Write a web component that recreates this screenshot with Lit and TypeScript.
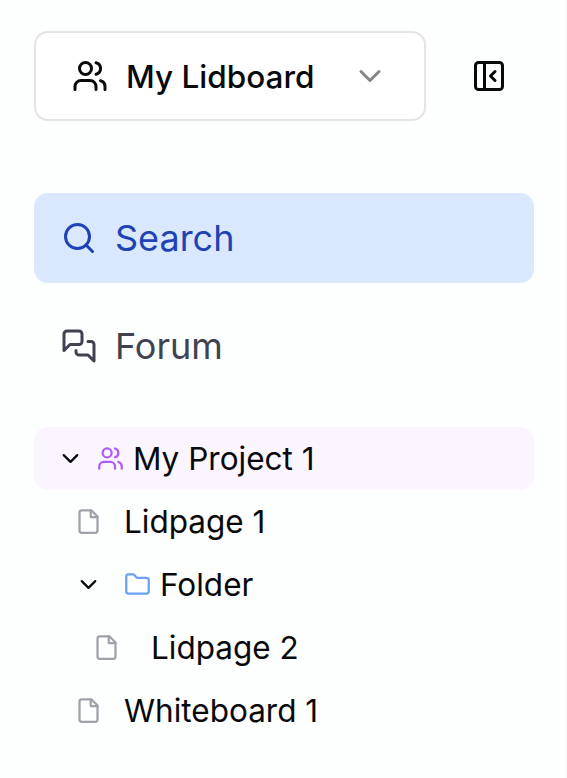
import { LitElement, html, css, svg } from "lit";
import { customElement, property } from "lit/decorators.js";

const glyphs = {
  users: svg`<path d="M16 21v-2a4 4 0 0 0-4-4H6a4 4 0 0 0-4 4v2"/><circle cx="9" cy="7" r="4"/><path d="M22 21v-2a4 4 0 0 0-3-3.87"/><path d="M16 3.13a4 4 0 0 1 0 7.75"/>`,
  chevron: svg`<path d="m6 9 6 6 6-6"/>`,
  panel: svg`<rect x="3" y="3" width="18" height="18" rx="2"/><path d="M9 3v18"/><path d="m16 15-3-3 3-3"/>`,
  search: svg`<circle cx="11" cy="11" r="8"/><path d="m21 21-4.3-4.3"/>`,
  forum: svg`<path d="M14 9a2 2 0 0 1-2 2H6l-4 4V4a2 2 0 0 1 2-2h8a2 2 0 0 1 2 2z"/><path d="M18 9h2a2 2 0 0 1 2 2v11l-4-4h-6a2 2 0 0 1-2-2v-1"/>`,
  file: svg`<path d="M14.5 2H6a2 2 0 0 0-2 2v16a2 2 0 0 0 2 2h12a2 2 0 0 0 2-2V7.5L14.5 2z"/><path d="M14 2v6h6"/>`,
  folder: svg`<path d="M20 20a2 2 0 0 0 2-2V8a2 2 0 0 0-2-2h-7.9a2 2 0 0 1-1.69-.9L9.6 3.9A2 2 0 0 0 7.93 3H4a2 2 0 0 0-2 2v13a2 2 0 0 0 2 2Z"/>`,
};

@customElement("ui-icon")
class UiIcon extends LitElement {
  @property() name: keyof typeof glyphs = "file";

  static styles = css`
    :host { display: block; flex: none; width: 36px; height: 36px; }
    svg {
      display: block; width: 100%; height: 100%;
      fill: none; stroke: currentColor; stroke-width: 2;
      stroke-linecap: round; stroke-linejoin: round;
    }
  `;

  render() {
    return html`<svg viewBox="0 0 24 24" aria-hidden="true">${glyphs[this.name]}</svg>`;
  }
}

@customElement("app-root")
class AppRoot extends LitElement {
  static styles = css`
    :host {
      display: block; box-sizing: border-box; height: 778px;
      padding: 31px 32px 0 34px;
      border-right: 1px solid #f4f4f5;
      background: #fdfefe; color: #09090b;
      font-family: Inter, "Liberation Sans", sans-serif;
      font-size: 31.5px; line-height: 45px;
      overflow: hidden;
    }
    .header { display: flex; align-items: center; height: 90px; }
    .picker {
      box-sizing: border-box; display: flex; align-items: center;
      width: 392px; height: 90px; padding: 0 36px;
      border: 2px solid #e4e4e7; border-radius: 14px;
      background: #fff; font-weight: 500;
    }
    .picker span { flex: 1; margin-left: 18px; white-space: nowrap; }
    .picker .arrow { color: #858589; }
    .collapse { margin-left: 45px; }
    .nav { display: flex; flex-direction: column; gap: 18px; margin-top: 72px; }
    .link {
      display: flex; align-items: center; gap: 18px;
      height: 90px; padding-left: 27px; border-radius: 14px;
      font-size: 36px; color: #3f4350;
    }
    .link.active { background: #dae8ff; color: #1f42b4; }
    .tree { margin-top: 36px; }
    .row { display: flex; align-items: center; height: 63px; border-radius: 14px; white-space: nowrap; }
    .row ui-icon { width: 27px; height: 27px; }
    .project { background: #faf5ff; padding-left: 23px; }
    .project .kind { margin: 0 9px 0 13px; color: #ad5cfa; }
    .level1 { padding-left: 41px; }
    .level2 { padding-left: 59px; }
    .doc { color: #a1a1aa; margin-right: 22px; }
    .level2 .doc { margin-right: 31px; }
    .folder .kind { margin: 0 9px 0 22px; color: #6ba1f5; }
  `;

  render() {
    return html`
      <div class="header">
        <div class="picker">
          <ui-icon name="users"></ui-icon>
          <span>My Lidboard</span>
          <ui-icon class="arrow" name="chevron"></ui-icon>
        </div>
        <ui-icon class="collapse" name="panel"></ui-icon>
      </div>
      <nav class="nav">
        <div class="link active"><ui-icon name="search"></ui-icon><span>Search</span></div>
        <div class="link"><ui-icon name="forum"></ui-icon><span>Forum</span></div>
      </nav>
      <div class="tree">
        <div class="row project">
          <ui-icon name="chevron"></ui-icon><ui-icon class="kind" name="users"></ui-icon><span>My Project 1</span>
        </div>
        <div class="row level1"><ui-icon class="doc" name="file"></ui-icon><span>Lidpage 1</span></div>
        <div class="row level1 folder">
          <ui-icon name="chevron"></ui-icon><ui-icon class="kind" name="folder"></ui-icon><span>Folder</span>
        </div>
        <div class="row level2"><ui-icon class="doc" name="file"></ui-icon><span>Lidpage 2</span></div>
        <div class="row level1"><ui-icon class="doc" name="file"></ui-icon><span>Whiteboard 1</span></div>
      </div>
    `;
  }
}
